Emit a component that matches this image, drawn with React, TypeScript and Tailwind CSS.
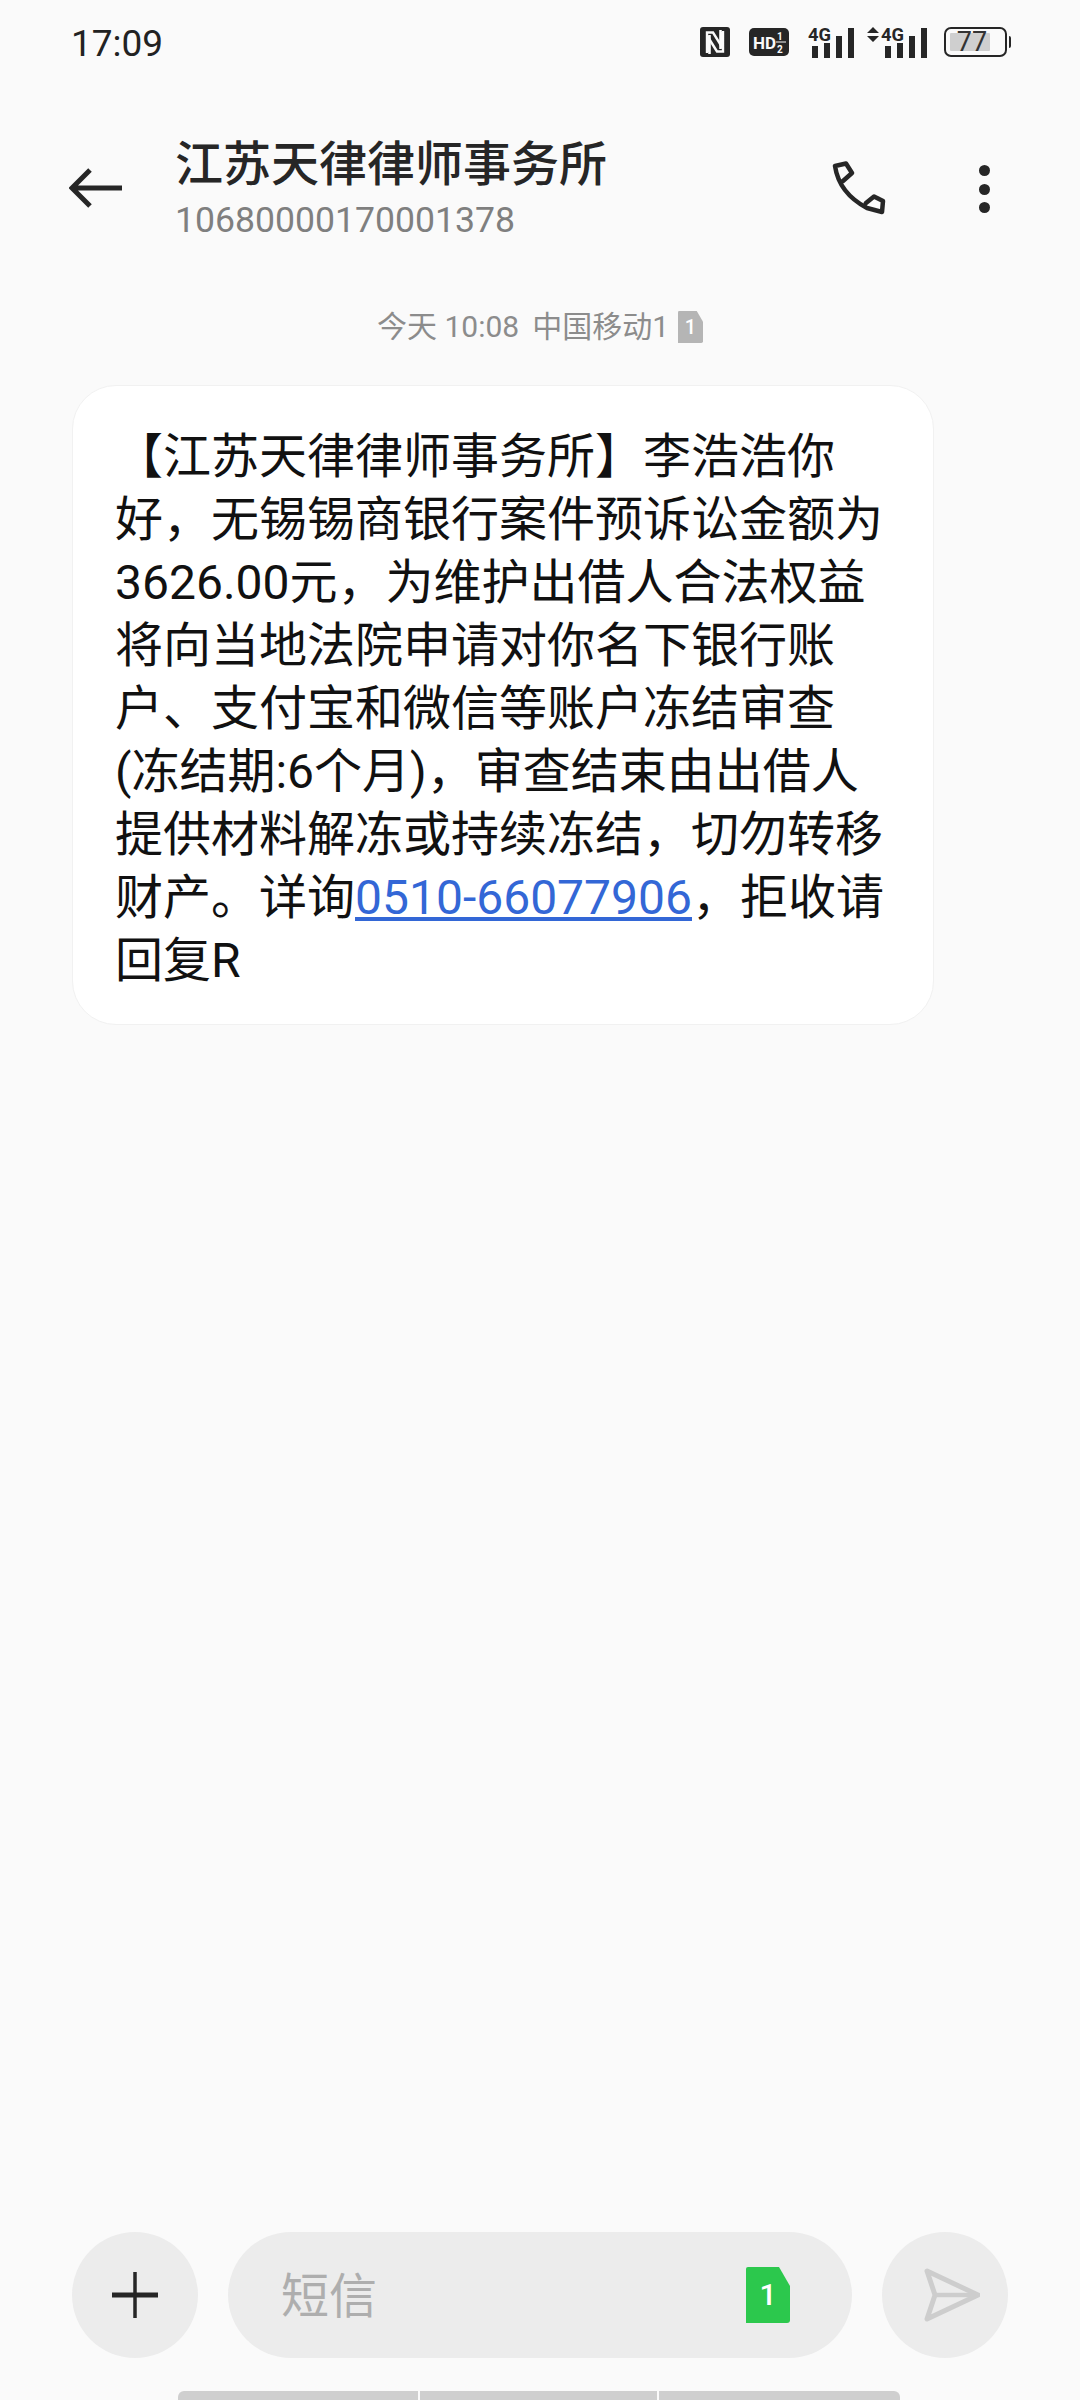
import React from 'react';

const cjk = '[font-family:Roboto,"Noto_Sans_CJK_SC",sans-serif]';

const NfcIcon = () => (
  <svg width="30" height="30" viewBox="0 0 30 30">
    <rect width="30" height="30" rx="3" fill="#262626" />
    <path d="M7 26V5.5L13 5.5L22 20V5M23 4V24.5L17 24.5L8 10V25" fill="none" stroke="#fafafa" strokeWidth="2.4" />
    <path d="M9.5 8V27M20.5 3V22" stroke="#fafafa" strokeWidth="2.6" />
  </svg>
);

const HdIcon = () => (
  <svg width="40" height="28" viewBox="0 0 40 28">
    <rect width="40" height="28" rx="5" fill="#262626" />
    <text x="4" y="21" fontSize="17" fontWeight="700" fill="#fafafa" fontFamily="Roboto">HD</text>
    <text x="28" y="12" fontSize="10" fontWeight="700" fill="#fafafa" fontFamily="Roboto">1</text>
    <text x="28" y="25" fontSize="10" fontWeight="700" fill="#fafafa" fontFamily="Roboto">2</text>
    <path d="M27 14H37" stroke="#fafafa" strokeWidth="1" />
  </svg>
);

const Signal = ({ arrows }: { arrows?: boolean }) => {
  const dx = arrows ? 15 : 0;
  const w = arrows ? 61 : 46;
  return (
    <svg width={w} height="38" viewBox={`0 -6 ${w} 38`} className="-mt-[6px]">
      {arrows && <path d="M1 7L7 1L13 7ZM1 10L7 16L13 10Z" fill="#262626" />}
      <text x={dx} y="14.5" fontSize="19" fontWeight="700" fill="#262626" fontFamily="Roboto" textLength="23" lengthAdjust="spacingAndGlyphs">4G</text>
      <rect x={dx + 4} y="20" width="6" height="12" fill="#262626" />
      <rect x={dx + 16} y="17" width="6" height="15" fill="#262626" />
      <rect x={dx + 28} y="10" width="6" height="22" fill="#262626" />
      <rect x={dx + 40} y="2" width="6" height="30" fill="#262626" />
    </svg>
  );
};

const Battery = () => (
  <div className="flex items-center">
    <div className="relative h-[30px] w-[63px] rounded-[7px] border-2 border-[#262626]">
      <div className="absolute left-[4px] top-[4px] bottom-[4px] w-[40px] rounded-[1px] bg-[#cfcfcf]" />
      <span className={`absolute inset-0 flex items-center justify-center pr-[7px] text-[27px] leading-none text-[#333] ${cjk}`}>77</span>
    </div>
    <div className="ml-[2px] h-[12px] w-[2px] rounded-r bg-[#262626]" />
  </div>
);

const SimCard = ({ color, w, h, size }: { color: string; w: number; h: number; size: string }) => (
  <div className="relative shrink-0" style={{ width: w, height: h }}>
    <svg width={w} height={h} viewBox="0 0 44 56" preserveAspectRatio="none" className="absolute inset-0">
      <path d="M2 0H33L44 19V53Q44 56 41 56H0V2Q0 0 2 0Z" fill={color} />
    </svg>
    <span className={`absolute inset-0 flex items-center justify-center leading-none font-medium text-white ${size} ${cjk}`}>1</span>
  </div>
);

export default function App() {
  return (
    <div className={`flex h-[2400px] w-[1080px] flex-col overflow-hidden bg-[#fafafa] ${cjk}`}>
      {/* status bar */}
      <div className="flex h-[84px] shrink-0 items-center justify-between pl-[71px] pr-[69px]">
        <span className="pt-[2px] text-[37px] leading-none text-[#222]">17:09</span>
        <div className="flex items-center">
          <NfcIcon />
          <div className="ml-[19px]"><HdIcon /></div>
          <div className="ml-[19px] flex"><Signal /></div>
          <div className="ml-[12px] flex"><Signal arrows /></div>
          <div className="ml-[17px]"><Battery /></div>
        </div>
      </div>

      {/* header */}
      <div className="mt-[42px] flex h-[124px] shrink-0 items-center pl-[69px] pr-[90px]">
        <svg width="56" height="44" viewBox="0 0 56 44" className="shrink-0">
          <path d="M53 22H4M21 4L3 22L21 40" fill="none" stroke="#262626" strokeWidth="5" />
        </svg>
        <div className="ml-[50px] flex-1">
          <div className="text-[48px] leading-[62px] font-medium text-[#262626]">江苏天律律师事务所</div>
          <div className="mt-[1px] text-[35.6px] leading-[46px] text-[#7f7f7f]">10680000170001378</div>
        </div>
        <svg width="56" height="56" viewBox="0 0 56 56" className="mt-[2px] shrink-0">
          <path
            d="M4 5L15 2.5L21 12L12 20M4 5C7 25 19 38 36 47L51 51L52 40L43 35.5L35 42"
            fill="none"
            stroke="#262626"
            strokeWidth="4.5"
            strokeLinejoin="round"
            strokeLinecap="round"
          />
        </svg>
        <div className="ml-[92px] flex shrink-0 flex-col gap-[7.5px] pt-[2px]">
          <div className="h-[11px] w-[11px] rounded-full bg-[#262626]" />
          <div className="h-[11px] w-[11px] rounded-full bg-[#262626]" />
          <div className="h-[11px] w-[11px] rounded-full bg-[#262626]" />
        </div>
      </div>

      {/* timestamp */}
      <div className="mt-[60px] flex h-[34px] shrink-0 items-center justify-center text-[30px] leading-none text-[#8c8c8c]">
        <span>今天 10:08</span>
        <span className="ml-[13px]">中国移动1</span>
        <div className="ml-[9px]"><SimCard color="#b5b5b5" w={25} h={32} size="text-[20px]" /></div>
      </div>

      {/* message */}
      <div className="mt-[41px] ml-[72px] h-[640px] w-[862px] shrink-0 rounded-[44px] border border-[#f1f1f1] bg-white pt-[39px] pl-[42px] text-[48px] leading-[63px] whitespace-nowrap text-[#111]">
        【江苏天律律师事务所】李浩浩你<br />
        好，无锡锡商银行案件预诉讼金额为<br />
        3626.00元，为维护出借人合法权益<br />
        将向当地法院申请对你名下银行账<br />
        户、支付宝和微信等账户冻结审查<br />
        (冻结期:6个月)，审查结束由出借人<br />
        提供材料解冻或持续冻结，切勿转移<br />
        财产。详询<span className="text-[#3367d6] underline">0510-66077906</span>，拒收请<br />
        回复R
      </div>

      <div className="flex-1" />

      {/* compose bar */}
      <div className="flex h-[126px] shrink-0 items-center pl-[72px]">
        <div className="flex h-[126px] w-[126px] items-center justify-center rounded-full bg-[#ececec]">
          <svg width="46" height="46" viewBox="0 0 46 46">
            <path d="M23 0V46" stroke="#262626" strokeWidth="3.5" />
            <path d="M0 23H46" stroke="#262626" strokeWidth="5" />
          </svg>
        </div>
        <div className="ml-[30px] flex h-[126px] w-[624px] items-center rounded-full bg-[#ececec] pl-[53px] pr-[62px]">
          <span className="flex-1 pt-[4px] text-[48px] leading-none text-[#aeaeae]">短信</span>
          <SimCard color="#2cc84d" w={44} h={56} size="text-[30px]" />
        </div>
        <div className="ml-[30px] flex h-[126px] w-[126px] items-center justify-center rounded-full bg-[#ececec]">
          <svg width="70" height="56" viewBox="0 0 70 56">
            <path d="M17 4L68 28L17 52L25 28Z" fill="none" stroke="#cdcdcd" strokeWidth="5" strokeLinejoin="round" />
            <path d="M25 28H68" stroke="#cdcdcd" strokeWidth="4.5" />
          </svg>
        </div>
      </div>

      {/* home indicator */}
      <div className="mt-[33px] ml-[178px] flex h-[9px] w-[722px] shrink-0 gap-[2px] overflow-hidden rounded-t-[6px]">
        <div className="w-[240px] bg-[#cfcfcf]" />
        <div className="w-[237px] bg-[#cfcfcf]" />
        <div className="flex-1 bg-[#cfcfcf]" />
      </div>
    </div>
  );
}
